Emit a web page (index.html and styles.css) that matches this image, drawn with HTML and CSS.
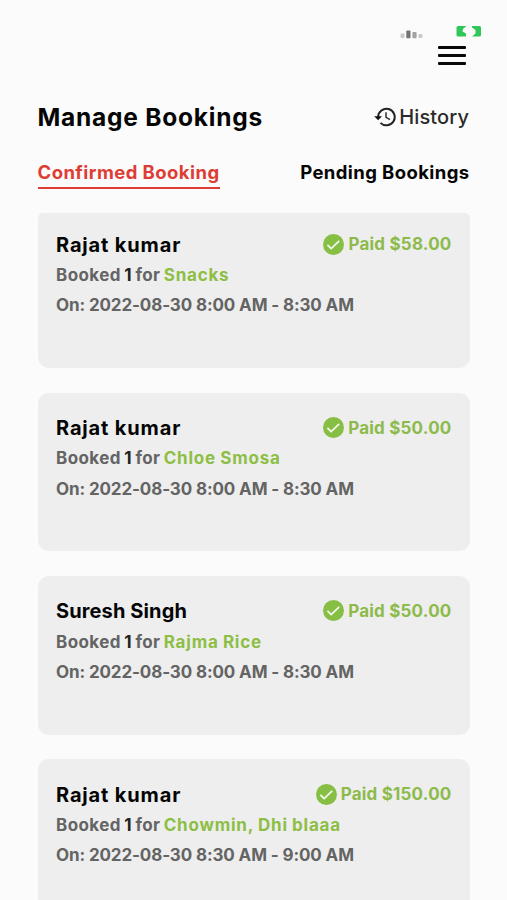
FILE: index.html
```html
<!DOCTYPE html>
<html lang="en">
<head>
<meta charset="utf-8">
<title>Manage Bookings</title>
<link rel="stylesheet" href="styles.css">
</head>
<body>
<svg class="defs" aria-hidden="true">
  <symbol id="check" viewBox="0 0 21 21">
    <circle cx="10.5" cy="10.5" r="10.5" fill="#87bf45"/>
    <path d="M4.4 10.8l3.8 3.7 8-7.7" fill="none" stroke="#f6faf0" stroke-width="1.7"/>
  </symbol>
</svg>
<main class="screen">
  <div class="status">
    <svg class="signal" width="24" height="10" viewBox="0 0 24 10">
      <rect x="0.5" y="4.5" width="4" height="4.5" rx="1" fill="#c9c9c9"/>
      <rect x="6.3" y="1.5" width="4.2" height="7.8" rx="1" fill="#737373"/>
      <rect x="12.4" y="3" width="4.2" height="6.2" rx="1" fill="#a2a2a2"/>
      <rect x="18.5" y="5" width="4" height="4" rx="1" fill="#c9c9c9"/>
    </svg>
    <svg class="battery" width="26" height="12" viewBox="0 0 26 12">
      <path d="M2 1H10.5L7 4L6.5 6.5L10 8.5V11.5H2Q0.5 11.5 0.5 10V2.500Q0.5 1 2 1Z" fill="#30c759"/>
      <path d="M16 1H23.500Q25 1 25 2.500V10Q25 11.500 23.500 11.500H16L19.500 8.500V5L16 2.500Z" fill="#30c759"/>
    </svg>
  </div>
  <button class="menu" aria-label="Menu"><i></i><i></i><i></i></button>
  <header class="heading">
    <h1>Manage Bookings</h1>
    <a class="history">
      <svg width="22" height="20" viewBox="0 0 22 20">
        <path d="M4.1 10A8.3 8.3 0 1 1 6.5 15.9" fill="none" stroke="#222" stroke-width="2"/>
        <path d="M0.2 9.2H8L4.1 13.2Z" fill="#111"/>
        <path d="M12 5.3V10.3L16 12.7" fill="none" stroke="#333" stroke-width="1.5"/>
      </svg>
      <span>History</span>
    </a>
  </header>
  <nav class="tabs">
    <a class="tab active">Confirmed Booking</a>
    <a class="tab">Pending Bookings</a>
  </nav>
  <section class="list">
    <article class="card first">
      <div class="top"><h2>Rajat kumar</h2><div class="paid"><svg width="21" height="21"><use href="#check"/></svg><span>Paid $58.00</span></div></div>
      <p class="order">Booked <b>1</b> for <em>Snacks</em></p>
      <p class="date">On: 2022-08-30 8:00 AM - 8:30 AM</p>
    </article>
    <article class="card">
      <div class="top"><h2>Rajat kumar</h2><div class="paid"><svg width="21" height="21"><use href="#check"/></svg><span>Paid $50.00</span></div></div>
      <p class="order">Booked <b>1</b> for <em>Chloe Smosa</em></p>
      <p class="date">On: 2022-08-30 8:00 AM - 8:30 AM</p>
    </article>
    <article class="card">
      <div class="top"><h2 class="tight">Suresh Singh</h2><div class="paid"><svg width="21" height="21"><use href="#check"/></svg><span>Paid $50.00</span></div></div>
      <p class="order">Booked <b>1</b> for <em>Rajma Rice</em></p>
      <p class="date">On: 2022-08-30 8:00 AM - 8:30 AM</p>
    </article>
    <article class="card">
      <div class="top"><h2>Rajat kumar</h2><div class="paid"><svg width="21" height="21"><use href="#check"/></svg><span>Paid $150.00</span></div></div>
      <p class="order">Booked <b>1</b> for <em>Chowmin, Dhi blaaa</em></p>
      <p class="date">On: 2022-08-30 8:30 AM - 9:00 AM</p>
    </article>
  </section>
</main>
</body>
</html>
```
FILE: styles.css
```css
* { box-sizing: border-box; margin: 0; padding: 0; }
body { background: #fbfbfb; font-family: Inter, "Open Sans", sans-serif; color: #050505; }
.defs { display: none; }
.screen { height: 900px; overflow: hidden; padding: 25px 37px 0 37.5px; }
.screen svg { display: block; flex: none; }
.status { height: 20px; display: flex; justify-content: flex-end; gap: 32px; margin-right: -11.5px; }
.signal { margin-top: 4px; }
.menu { display: flex; flex-direction: column; justify-content: space-between; width: 28px; height: 19px; margin: 1px 4px 0 auto; border: 0; background: none; }
.menu i { display: block; width: 28px; height: 3px; border-radius: 1px; background: #080808; }
.heading { display: flex; justify-content: space-between; align-items: center; height: 40px; margin-top: 32px; }
h1 { font-size: 24.5px; font-weight: 700; letter-spacing: 0.77px; white-space: nowrap; }
.history { display: flex; align-items: center; gap: 3.5px; margin-right: 1px; font-size: 20px; font-weight: 550; letter-spacing: 0.1px; color: #2b2b2b; }
.tabs { display: flex; justify-content: space-between; height: 29px; margin-top: 22px; padding-right: 0.5px; }
.tab { height: 29.5px; line-height: 27.5px; font-size: 18.5px; font-weight: 700; letter-spacing: 0.4px; white-space: nowrap; }
.tab.active { color: #dd3d35; border-bottom: 2.5px solid #dd3d35; letter-spacing: 0.44px; }
.list { display: flex; flex-direction: column; gap: 24.7px; margin-top: 24.8px; }
.card { height: 158.6px; flex: none; padding: 20.3px 18.5px 0; background: #eee; border-radius: 11px; }
.card.first { height: 155.3px; padding-top: 17px; border-radius: 5px 5px 11px 11px; }
.top { display: flex; justify-content: space-between; height: 31.2px; }
h2 { font-size: 20px; line-height: 30.8px; font-weight: 700; letter-spacing: 0.85px; }
h2.tight { letter-spacing: 0.12px; }
.paid { display: flex; align-items: center; gap: 4px; height: 29.2px; color: #8dbb4b; font-size: 17px; font-weight: 700; letter-spacing: 0.2px; }
.order, .date { font-size: 17px; line-height: 29.5px; font-weight: 700; color: #646464; white-space: nowrap; }
.order { letter-spacing: 0.42px; word-spacing: -1.1px; }
.date { line-height: 30.2px; letter-spacing: -0.12px; }
.order b { font-weight: 700; color: #222; }
.order em { font-style: normal; color: #8dbe45; letter-spacing: 0.78px; word-spacing: -0.5px; }
```
